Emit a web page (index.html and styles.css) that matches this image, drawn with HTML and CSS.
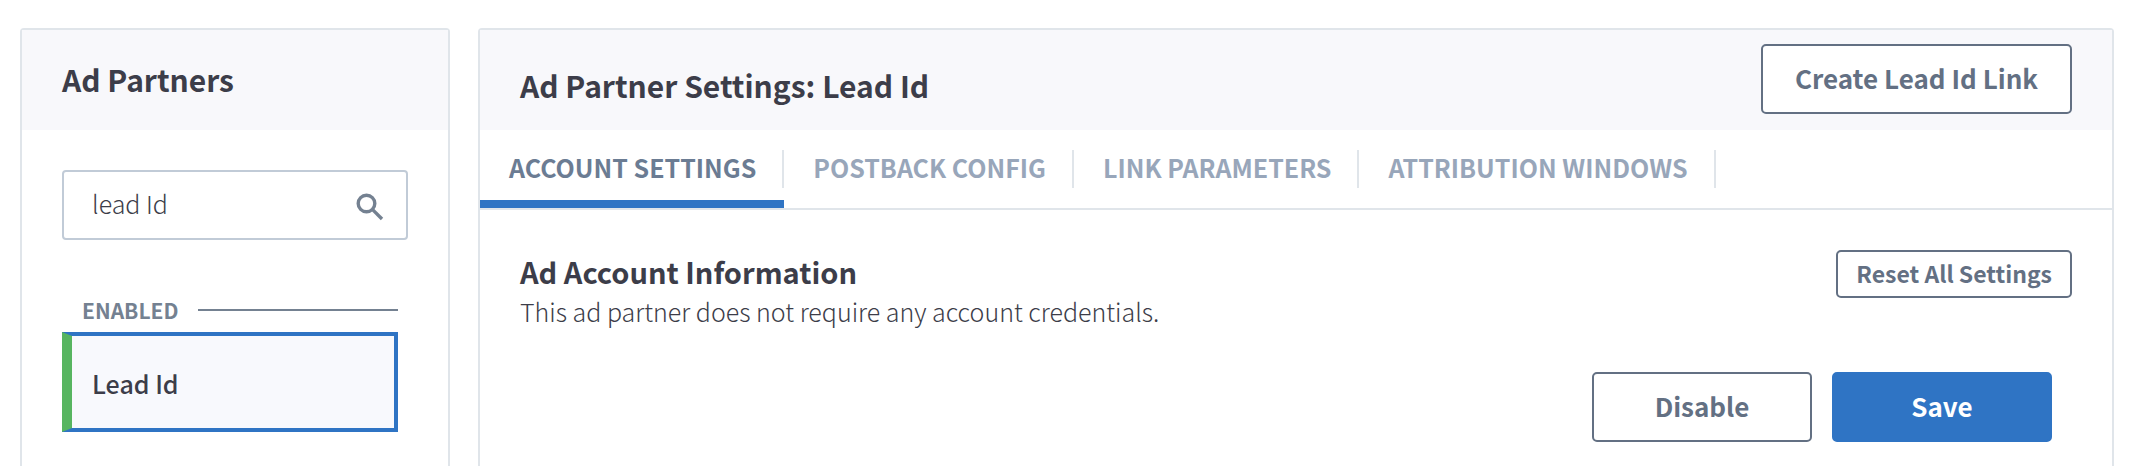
FILE: index.html
```html
<!DOCTYPE html>
<html lang="en">
<head>
<meta charset="utf-8">
<title>Ad Partner Settings</title>
<link rel="stylesheet" href="styles.css">
</head>
<body>
<div class="page">
  <aside class="card sidebar">
    <header class="card-header">
      <h2 class="title">Ad Partners</h2>
    </header>
    <div class="sidebar-body">
      <label class="search">
        <input class="search-input" type="text" value="lead Id" aria-label="Search ad partners">
        <svg class="search-icon" viewBox="0 0 28 28" aria-hidden="true">
          <circle cx="10.5" cy="10.5" r="8.3"/>
          <path d="M16.6 16.6L26 26"/>
        </svg>
      </label>
      <div class="group">
        <h3 class="group-label">ENABLED</h3>
        <button class="partner" type="button">Lead Id</button>
      </div>
    </div>
  </aside>
  <main class="card main">
    <header class="card-header main-header">
      <h1 class="title main-title">Ad Partner Settings: Lead Id</h1>
      <button class="button" type="button">Create Lead Id Link</button>
    </header>
    <nav class="tabs">
      <a class="tab active" href="#account"><span class="tab-text">ACCOUNT SETTINGS</span></a>
      <a class="tab" href="#postback"><span class="tab-text">POSTBACK CONFIG</span></a>
      <a class="tab" href="#parameters"><span class="tab-text">LINK PARAMETERS</span></a>
      <a class="tab" href="#windows"><span class="tab-text">ATTRIBUTION WINDOWS</span></a>
    </nav>
    <section class="content" id="account">
      <div class="info">
        <div>
          <h2 class="heading">Ad Account Information</h2>
          <p class="description">This ad partner does not require any account credentials.</p>
        </div>
        <button class="button small" type="button">Reset All Settings</button>
      </div>
      <div class="actions">
        <button class="button wide" type="button">Disable</button>
        <button class="button wide primary" type="button">Save</button>
      </div>
    </section>
  </main>
</div>
</body>
</html>
```
FILE: styles.css
```css
* {
  box-sizing: border-box;
}

body {
  margin: 0;
  background: #fff;
  color: #3c3d49;
  font-family: "Noto Sans CJK SC", "Noto Sans CJK JP", sans-serif;
  font-size: 25px;
}

h1, h2, h3, p {
  margin: 0;
}

button, input {
  font: inherit;
  color: inherit;
}

.page {
  display: flex;
  gap: 28px;
  min-height: 100vh;
  padding: 28px 22px 0 20px;
}

.card {
  border: 2px solid #e0e5ea;
  border-bottom: 0;
  border-radius: 4px 4px 0 0;
}

.sidebar {
  flex: 0 0 430px;
  min-width: 0;
}

.main {
  flex: 1;
  min-width: 0;
}

.card-header {
  display: flex;
  align-items: center;
  height: 100px;
  padding: 0 40px 2px;
  background: #f8f8fb;
}

.title {
  font-size: 30px;
  font-weight: 700;
  line-height: 40px;
}

.heading {
  font-size: 29px;
  font-weight: 700;
  line-height: 42px;
}

.sidebar-body {
  padding: 40px;
}

.search {
  display: flex;
  align-items: center;
  height: 70px;
  padding: 0 22px 0 28px;
  border: 2px solid #c1cbd7;
  border-radius: 4px;
}

.search-input {
  flex: 1;
  min-width: 0;
  padding: 0 0 4px;
  border: 0;
  outline: 0;
  background: none;
  font-weight: 300;
}

.search-icon {
  flex: none;
  width: 28px;
  height: 28px;
  margin-top: 4px;
  fill: none;
  stroke: #748191;
  stroke-width: 3.4;
}

.group {
  margin: 54px 10px 0 0;
}

.group-label {
  display: flex;
  align-items: center;
  gap: 20px;
  padding: 0 0 6px 20px;
  color: #748191;
  font-size: 21px;
  font-weight: 700;
  line-height: 32px;
}

.group-label::after {
  content: "";
  flex: 1;
  height: 2px;
  background: #748191;
}

.partner {
  display: block;
  width: 100%;
  height: 100px;
  padding: 2px 20px 0;
  border: 4px solid #2f74c4;
  border-left: 10px solid #57b560;
  background: #f8f9fd;
  font-weight: 500;
  text-align: left;
}

.main-header {
  align-items: flex-start;
  justify-content: space-between;
  padding-top: 14px;
}

.main-title {
  padding-top: 21px;
}

.button {
  height: 70px;
  padding: 0 32px 4px;
  border: 2px solid #637083;
  border-radius: 5px;
  background: #fff;
  color: #637083;
  font-size: 26px;
  font-weight: 700;
  white-space: nowrap;
}

.small {
  height: 48px;
  padding: 0 18px 2px;
  font-size: 23px;
  line-height: 32px;
}

.wide {
  width: 220px;
}

.primary {
  border-color: #2f74c4;
  background: #2f74c4;
  color: #fff;
}

.tabs {
  display: flex;
  border-bottom: 2px solid #e0e5ea;
}

.tab {
  padding: 20px 0 12px;
  border-bottom: 8px solid transparent;
  color: #98a6ba;
  font-weight: 700;
  text-decoration: none;
  white-space: nowrap;
}

.tab-text {
  display: block;
  padding: 0 26px 3px 29px;
  border-right: 2px solid #e0e5ea;
  line-height: 35px;
}

.active {
  border-color: #2f74c4;
  color: #6b7c93;
}

.content {
  padding: 40px;
}

.info {
  display: flex;
  align-items: flex-start;
  justify-content: space-between;
}

.description {
  font-weight: 300;
  line-height: 38px;
}

.actions {
  display: flex;
  justify-content: flex-end;
  gap: 20px;
  padding: 42px 20px 0 0;
}
```
